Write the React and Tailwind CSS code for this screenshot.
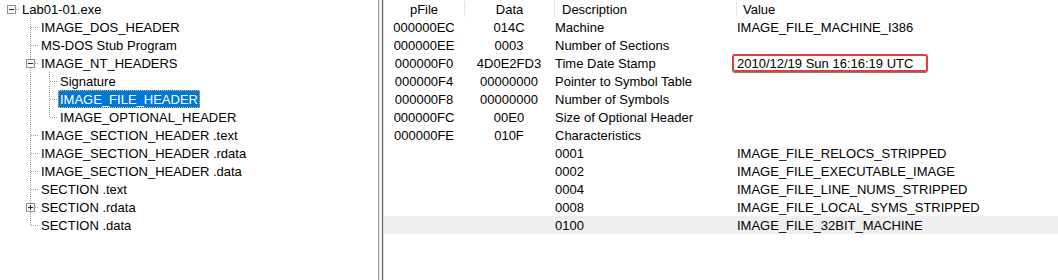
import React from "react";

const F = { fontFamily: '"Liberation Sans", Arial, sans-serif' };

function Guide({ v, h, box }) {
  return (
    <svg width="19" height="18" className="shrink-0 block" shapeRendering="crispEdges">
      {v === "full" && (
        <line x1="10.5" y1="0" x2="10.5" y2="18" stroke="#a0a0a0" strokeDasharray="1 1" />
      )}
      {v === "top" && (
        <line x1="10.5" y1="0" x2="10.5" y2="10" stroke="#a0a0a0" strokeDasharray="1 1" />
      )}
      {h && (
        <line x1="11" y1="9.5" x2="19" y2="9.5" stroke="#a0a0a0" strokeDasharray="1 1" />
      )}
      {box && (
        <g>
          <rect x="6.5" y="5.5" width="8" height="8" fill="#f7f7f7" stroke="#919191" />
          <line x1="8" y1="9.5" x2="13" y2="9.5" stroke="#2b2b2b" />
          {box === "plus" && <line x1="10.5" y1="7" x2="10.5" y2="12" stroke="#2b2b2b" />}
        </g>
      )}
    </svg>
  );
}

const L1 = [{}, { v: "full", h: true }];
const L1last = [{}, { v: "top", h: true }];
const L2 = [{}, { v: "full" }, { v: "full", h: true }];
const L2last = [{}, { v: "full" }, { v: "top", h: true }];

const tree = [
  { label: "Lab01-01.exe", g: [{ h: true, box: "minus" }] },
  { label: "IMAGE_DOS_HEADER", g: L1 },
  { label: "MS-DOS Stub Program", g: L1 },
  { label: "IMAGE_NT_HEADERS", g: [{}, { v: "full", h: true, box: "minus" }] },
  { label: "Signature", g: L2 },
  { label: "IMAGE_FILE_HEADER", g: L2, sel: true },
  { label: "IMAGE_OPTIONAL_HEADER", g: L2last },
  { label: "IMAGE_SECTION_HEADER .text", g: L1 },
  { label: "IMAGE_SECTION_HEADER .rdata", g: L1 },
  { label: "IMAGE_SECTION_HEADER .data", g: L1 },
  { label: "SECTION .text", g: L1 },
  { label: "SECTION .rdata", g: [{}, { v: "full", h: true, box: "plus" }] },
  { label: "SECTION .data", g: L1last },
];

const rows = [
  ["000000EC", "014C", "Machine", "IMAGE_FILE_MACHINE_I386"],
  ["000000EE", "0003", "Number of Sections", ""],
  ["000000F0", "4D0E2FD3", "Time Date Stamp", "2010/12/19 Sun 16:16:19 UTC", "box"],
  ["000000F4", "00000000", "Pointer to Symbol Table", ""],
  ["000000F8", "00000000", "Number of Symbols", ""],
  ["000000FC", "00E0", "Size of Optional Header", ""],
  ["000000FE", "010F", "Characteristics", ""],
  ["", "", "0001", "IMAGE_FILE_RELOCS_STRIPPED"],
  ["", "", "0002", "IMAGE_FILE_EXECUTABLE_IMAGE"],
  ["", "", "0004", "IMAGE_FILE_LINE_NUMS_STRIPPED"],
  ["", "", "0008", "IMAGE_FILE_LOCAL_SYMS_STRIPPED"],
  ["", "", "0100", "IMAGE_FILE_32BIT_MACHINE", "hl"],
];

export default function App() {
  return (
    <div className="flex w-[1058px] h-[280px] bg-white text-[13px] leading-[18px] text-black overflow-hidden" style={F}>
      {/* Tree */}
      <div className="w-[378px] shrink-0 pl-[1px]">
        {tree.map((n, i) => (
          <div key={i} className="flex h-[18px] items-center">
            {n.g.map((g, j) => (
              <Guide key={j} {...g} />
            ))}
            {n.sel ? (
              <span className="h-[18px] px-[1px] pt-px bg-[#0078d7] text-white border border-dotted border-[#f0b060] leading-[15px] whitespace-nowrap">
                {n.label}
              </span>
            ) : (
              <span className="px-[2px] pt-px h-[18px] leading-[17px] whitespace-nowrap">{n.label}</span>
            )}
          </div>
        ))}
      </div>
      {/* Splitter */}
      <div className="flex shrink-0 h-full">
        <div className="w-px bg-[#9a9a9a]" />
        <div className="w-[3px] bg-[#f0f0f0]" />
        <div className="w-px bg-[#6a6a6a]" />
        <div className="w-px bg-[#dcdcdc]" />
      </div>
      {/* Table */}
      <div className="flex-1 min-w-0">
        <div className="flex h-[18px] pt-px leading-[17px]">
          <div className="w-[80px] shrink-0 text-center">pFile</div>
          <div className="w-px h-[16px] bg-[#e5e5e5]" />
          <div className="w-[89px] shrink-0 text-center">Data</div>
          <div className="w-px h-[16px] bg-[#e5e5e5]" />
          <div className="w-[181px] shrink-0 pl-[7px]">Description</div>
          <div className="w-px h-[16px] bg-[#e5e5e5]" />
          <div className="flex-1 pl-[6px]">Value</div>
        </div>
        {rows.map((r, i) => (
          <div key={i} className={`flex h-[18px] ${r[4] === "hl" ? "bg-[#efefef]" : ""}`}>
            <div className="w-[80px] shrink-0 pt-px leading-[17px] text-center">{r[0]}</div>
            <div className="w-[90px] shrink-0 pt-px leading-[17px] text-center">{r[1]}</div>
            <div className="w-[182px] shrink-0 pt-px leading-[17px] pl-px whitespace-nowrap">{r[2]}</div>
            <div className="flex-1 whitespace-nowrap">
              {r[4] === "box" ? (
                <span className="inline-block w-[196px] h-[18px] -ml-[4px] pl-[3px] border-2 border-[#e53b3b] rounded-[3px] leading-[15px] shadow-[0_1px_0_#7a7a7a]">
                  {r[3]}
                </span>
              ) : (
                <span className="inline-block pt-px leading-[17px] pl-px">{r[3]}</span>
              )}
            </div>
          </div>
        ))}
      </div>
    </div>
  );
}
